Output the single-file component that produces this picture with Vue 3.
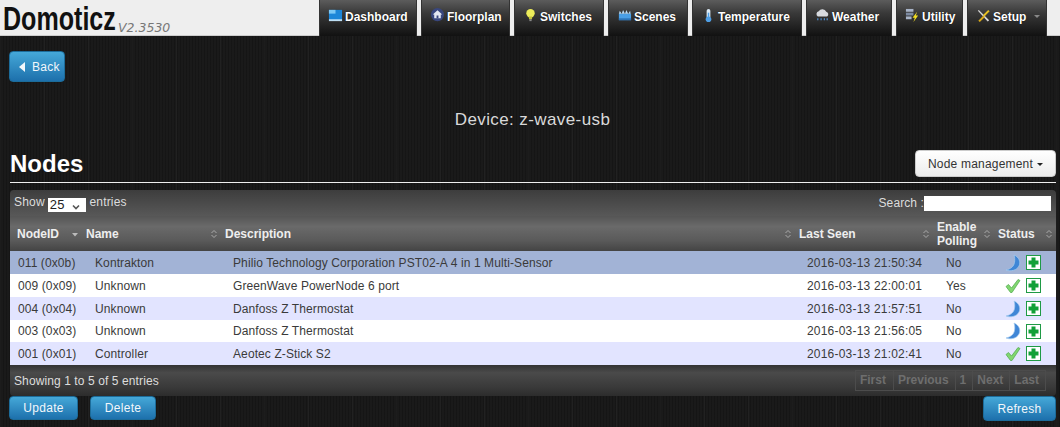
<template>
  <div class="page">
    <header class="topbar">
      <div class="brand">
        <span class="logo"><span class="logo-text">Domoticz</span></span>
        <span class="version">V2.3530</span>
      </div>
      <nav class="menu">
        <a v-for="item in menu" :key="item.label" class="menu-item" :style="{ width: item.width + 'px' }">
          <svg class="menu-icon" viewBox="0 0 16 16" width="15" height="15" v-html="item.icon"></svg>
          <span>{{ item.label }}</span>
          <i v-if="item.caret" class="menu-caret"></i>
        </a>
      </nav>
    </header>

    <main class="content">
      <button class="btn btn-blue btn-back"><i class="back-arrow"></i>Back</button>

      <h3 class="device">Device: z-wave-usb</h3>

      <div class="title-row">
        <h2>Nodes</h2>
        <button class="btn btn-white">Node management<i class="caret"></i></button>
      </div>

      <section class="grid">
        <div class="grid-top">
          <label class="length">Show <span class="select">25<svg viewBox="0 0 8 6" width="8" height="6"><path d="M1 1.5l3 3 3-3" fill="none" stroke="#555" stroke-width="1.6" /></svg></span> entries</label>
          <label class="search">Search :<span class="search-box"></span></label>
        </div>

        <table>
          <colgroup>
            <col v-for="w in colWidths" :key="w" :style="{ width: w + 'px' }" />
          </colgroup>
          <thead>
            <tr>
              <th v-for="(col, i) in columns" :key="col">
                <div class="th-inner">
                  <span>{{ col }}</span>
                  <svg v-if="i === 0" class="sort" viewBox="0 0 8 10" width="8" height="10"><path d="M1 4h6L4 7.5z" fill="#bbb" /></svg>
                  <svg v-else class="sort" viewBox="0 0 8 10" width="8" height="10"><path d="M1.5 4L4 1.5 6.5 4M1.5 6L4 8.5 6.5 6" fill="none" stroke="#aaa" stroke-width="1" /></svg>
                </div>
              </th>
            </tr>
          </thead>
          <tbody>
            <tr v-for="(n, i) in nodes" :key="n.id" :class="{ selected: i === 0, odd: i % 2 === 0 }" :style="{ height: n.h + 'px' }">
              <td>{{ n.id }}</td>
              <td>{{ n.name }}</td>
              <td>{{ n.desc }}</td>
              <td class="seen">{{ n.seen }}</td>
              <td>{{ n.polling }}</td>
              <td class="status">
                <svg v-if="n.asleep" viewBox="0 0 16 18" width="16" height="18">
                  <path d="M9 1c5 2 7 7 5 11-2 4-8 6-13 4 5-1 8-4 8.500-7.500C10 6 9.800 3 9 1z" fill="#3f86d6" stroke="#a5cbef" stroke-width=".7" />
                </svg>
                <svg v-else viewBox="0 0 16 18" width="16" height="18">
                  <path d="M1 9.500l2.500-2 3 3.500L13 2.500l2 1L7 15.500h-1.500z" fill="#82d770" stroke="#4aa84a" stroke-width=".7" />
                </svg>
                <svg class="plus" viewBox="0 0 15 15" width="15" height="15">
                  <rect x=".5" y=".5" width="14" height="14" fill="#fff" stroke="#1f9a45" />
                  <path d="M5.500 2.500h4v3h3v4h-3v3h-4v-3h-3v-4h3z" fill="#12a038" />
                </svg>
              </td>
            </tr>
          </tbody>
        </table>

        <div class="grid-bottom">
          <span>Showing 1 to 5 of 5 entries</span>
          <div class="pager">
            <span v-for="p in pages" :key="p">{{ p }}</span>
          </div>
        </div>
      </section>

      <div class="actions">
        <button class="btn btn-blue btn-update">Update</button>
        <button class="btn btn-blue btn-delete">Delete</button>
        <button class="btn btn-blue btn-refresh">Refresh</button>
      </div>
    </main>
  </div>
</template>

<script setup>
const menu = [
  {
    label: 'Dashboard', width: 98,
    icon: '<rect x="1" y="2" width="14" height="11" fill="#1d86d8"/><rect x="1" y="2" width="7" height="4" fill="#7cc8f5"/><rect x="1" y="12" width="14" height="2" fill="#bfe0f5"/>'
  },
  {
    label: 'Floorplan', width: 89,
    icon: '<circle cx="8" cy="7" r="7" fill="#39477e"/><path d="M8 2.500L3 7h1.500v4h7V7H13z" fill="#e4e8f2"/><rect x="7" y="8" width="2" height="3" fill="#39477e"/>'
  },
  {
    label: 'Switches', width: 90,
    icon: '<circle cx="8" cy="5.500" r="4.500" fill="#ecec5a"/><path d="M6 9h4l-.5 3h-3z" fill="#c4c43c"/><rect x="6.800" y="12" width="2.400" height="2" fill="#888"/>'
  },
  {
    label: 'Scenes', width: 80,
    icon: '<rect x="2" y="6" width="13" height="7" fill="#4a9fe6"/><path d="M2 6l1-3 2 3 1.500-4 2 4 1.500-4 2 4 2-3 .500 3z" fill="#b9dcf7"/><rect x="2" y="11" width="13" height="2" fill="#2c74b8"/>'
  },
  {
    label: 'Temperature', width: 110,
    icon: '<rect x="6" y="1" width="4" height="10" rx="2" fill="#dcebf7"/><circle cx="8" cy="12" r="3" fill="#4f9fe6"/><rect x="7.200" y="5" width="1.600" height="6" fill="#4f9fe6"/>'
  },
  {
    label: 'Weather', width: 86,
    icon: '<path d="M3 9a3 3 0 0 1 1-5.500A4.500 4.500 0 0 1 12 4a2.800 2.800 0 0 1 1 5z" fill="#d8dbe0"/><path d="M3 11v2M6.500 11v2M10 11v2M13 11v2" stroke="#4f8fd0" stroke-width="1.300"/>'
  },
  {
    label: 'Utility', width: 67,
    icon: '<rect x="1" y="1" width="8" height="3" fill="#a8b4c8"/><rect x="1" y="5" width="8" height="3" fill="#7c8aa2"/><rect x="1" y="9" width="6" height="3" fill="#a8b4c8"/><path d="M13 4L8 10.500h2.500L9 15l5-7h-2.500z" fill="#f5e020"/>'
  },
  {
    label: 'Setup', width: 80, caret: true,
    icon: '<path d="M2 3l1-1 11 11-1.500 1.500z" fill="#d8d8d8"/><path d="M13 2l1.500 1.500L9 9 7.500 7.500z" fill="#e8c020"/><path d="M8 8l-5.500 5.500L4 15l5.500-5.500z" fill="#d9a818"/>'
  }
]

const columns = ['NodeID', 'Name', 'Description', 'Last Seen', 'Enable Polling', 'Status']
const colWidths = [69, 139, 574, 138, 61, 65]
const pages = ['First', 'Previous', '1', 'Next', 'Last']

const nodes = [
  { id: '011 (0x0b)', name: 'Kontrakton', desc: 'Philio Technology Corporation PST02-A 4 in 1 Multi-Sensor', seen: '2016-03-13 21:50:34', polling: 'No', asleep: true, h: 23 },
  { id: '009 (0x09)', name: 'Unknown', desc: 'GreenWave PowerNode 6 port', seen: '2016-03-13 22:00:01', polling: 'Yes', asleep: false, h: 23 },
  { id: '004 (0x04)', name: 'Unknown', desc: 'Danfoss Z Thermostat', seen: '2016-03-13 21:57:51', polling: 'No', asleep: true, h: 23 },
  { id: '003 (0x03)', name: 'Unknown', desc: 'Danfoss Z Thermostat', seen: '2016-03-13 21:56:05', polling: 'No', asleep: true, h: 22 },
  { id: '001 (0x01)', name: 'Controller', desc: 'Aeotec Z-Stick S2', seen: '2016-03-13 21:02:41', polling: 'No', asleep: false, h: 23 }
]
</script>

<style>
html, body {
  margin: 0;
  background: #181818;
  overflow: hidden;
}
</style>

<style scoped>
.page {
  width: 1060px;
  height: 427px;
  overflow: hidden;
  font-family: "Liberation Sans", Arial, sans-serif;
  font-size: 12px;
  color: #ddd;
  background-color: #1a1a1a;
  background-image:
    repeating-linear-gradient(90deg, rgba(255,255,255,.03) 0 1px, transparent 1px 44px),
    repeating-linear-gradient(90deg, rgba(0,0,0,.18) 0 1px, transparent 1px 3px);
}

.topbar {
  height: 36px;
  background: #eeeeee;
  display: flex;
  justify-content: space-between;
  box-shadow: inset 0 -1px 0 #ccc;
}
.brand {
  display: flex;
  align-items: flex-end;
  padding-left: 3px;
  color: #111;
  white-space: nowrap;
}
.logo {
  display: block;
  width: 109px;
  height: 34px;
}
.logo-text {
  display: inline-block;
  font-weight: bold;
  font-size: 33px;
  line-height: 34px;
  transform: scaleX(.76);
  transform-origin: left center;
}
.version {
  font-family: "DejaVu Sans", sans-serif;
  font-style: italic;
  font-size: 12.500px;
  color: #777;
  margin: 0 0 1px 6px;
}
.menu {
  display: flex;
  gap: 4px;
  padding-right: 13px;
}
.menu-item {
  height: 36px;
  box-sizing: border-box;
  padding: 0 0 3px 8px;
  display: flex;
  align-items: center;
  gap: 2px;
  color: #fff;
  font-weight: bold;
  font-size: 12px;
  white-space: nowrap;
  text-shadow: 0 0 1px #000;
  background: linear-gradient(#5c5c5c, #3a3a3a 35%, #111 100%);
  border-left: 1px solid #333;
  border-right: 1px solid #333;
}
.menu-icon {
  flex: none;
  margin-top: -3px;
}
.menu-caret {
  width: 0;
  height: 0;
  margin-left: 6px;
  border: 3px solid transparent;
  border-top-color: #888;
  border-bottom: 0;
}

.content {
  padding: 15px 4px 0 10px;
}

.btn {
  font-family: "Liberation Sans", Arial, sans-serif;
  font-size: 12px;
  letter-spacing: .3px;
  border: 1px solid #1c6c9a;
  border-radius: 4px;
  padding: 0;
  cursor: pointer;
}
.btn-blue {
  color: #f2f7fb;
  background: linear-gradient(#45a8d8, #1d70ac);
}
.btn-white {
  color: #333;
  background: linear-gradient(#fff, #ececec);
  border-color: #ccc;
  width: 141px;
  height: 27px;
  letter-spacing: .2px;
}
.btn-back {
  display: block;
  width: 56px;
  height: 31px;
  margin-left: -1px;
  padding-left: 5px;
}
.back-arrow {
  display: inline-block;
  margin-right: 7px;
  border: 5px solid transparent;
  border-right: 6px solid #f2f7fb;
  border-left: 0;
  vertical-align: -1px;
}
.caret {
  display: inline-block;
  margin-left: 4px;
  border: 3px solid transparent;
  border-top-color: #222;
  border-bottom: 0;
  vertical-align: 2px;
}

.device {
  margin: 28px 0 0;
  height: 40px;
  text-align: center;
  font-weight: normal;
  font-size: 17px;
  line-height: 20px;
  color: #d9d9d9;
  letter-spacing: .4px;
  padding-right: 1px;
}

.title-row {
  display: flex;
  justify-content: space-between;
  align-items: flex-start;
  height: 32px;
  border-bottom: 1px solid #eee;
}
.title-row h2 {
  margin: 0;
  font-size: 24px;
  line-height: 28px;
  color: #fff;
}

.grid {
  margin-top: 7px;
  width: 1046px;
}
.grid-top {
  height: 26px;
  box-sizing: border-box;
  padding: 0 5px 0 4px;
  display: flex;
  justify-content: space-between;
  align-items: center;
  color: #ddd;
  letter-spacing: .2px;
  background: linear-gradient(#3d3d3d, #585858);
  border-radius: 4px 4px 0 0;
}
.select {
  display: inline-block;
  box-sizing: border-box;
  width: 38px;
  height: 14px;
  line-height: 14px;
  padding-left: 2px;
  background: #fff;
  color: #222;
  font-size: 13px;
  vertical-align: -3px;
  margin: 0 0 0 -.5px;
}
.select svg {
  margin-left: 7px;
  vertical-align: -1px;
}
.search {
  display: flex;
  align-items: center;
  letter-spacing: .1px;
}
.search-box {
  display: block;
  width: 127px;
  height: 15px;
  background: #fff;
}

table {
  width: 1046px;
  table-layout: fixed;
  border-collapse: collapse;
  border-spacing: 0;
}
th {
  height: 35px;
  padding: 0 0 0 7px;
  text-align: left;
  font-size: 12px;
  line-height: 14px;
  color: #eee;
  background: linear-gradient(#555 0, #6a6a6a 30%, #5a5a5a 70%, #444 100%);
}
th:last-child {
  padding-right: 3px;
}
.th-inner {
  display: flex;
  justify-content: space-between;
  align-items: center;
}
.sort {
  flex: none;
}
td {
  padding: 0 0 0 15px;
  white-space: nowrap;
  color: #3a3a3a;
  letter-spacing: .1px;
  line-height: 14px;
  background: #fff;
}
td:first-child {
  padding-left: 8px;
}
td:nth-child(2),
td:nth-child(5) {
  padding-left: 16px;
}
td.seen {
  letter-spacing: .2px;
}
tr.odd td {
  background: #e2e4ff;
}
tr.selected td {
  background: #a2b3d6;
}
.status {
  padding-left: 14px;
  font-size: 0;
}
.status svg {
  vertical-align: middle;
}
.status .plus {
  margin-left: 5px;
}

.grid-bottom {
  height: 31px;
  box-sizing: border-box;
  padding: 0 10px 0 4px;
  display: flex;
  justify-content: space-between;
  align-items: center;
  color: #ddd;
  letter-spacing: .1px;
  background: linear-gradient(#333, #4a4a4a 25%, #3a3a3a 70%, #2c2c2c);
  border-radius: 0 0 4px 4px;
}
.pager {
  display: flex;
  color: #6e6e6e;
  font-weight: bold;
  letter-spacing: 0;
  border: 1px solid #4c4c4c;
}
.pager span {
  padding: 2px 6px 2px 4px;
  line-height: 15px;
  border-left: 1px solid #4c4c4c;
}
.pager span:first-child {
  border-left: 0;
  padding-right: 7px;
}

.actions {
  display: flex;
  margin-top: 0;
}
.btn-update {
  width: 69px;
  height: 24px;
  margin-left: -1px;
}
.btn-delete {
  width: 66px;
  height: 24px;
  margin-left: 12px;
}
.btn-refresh {
  width: 73px;
  height: 25px;
  margin-left: auto;
}
</style>
